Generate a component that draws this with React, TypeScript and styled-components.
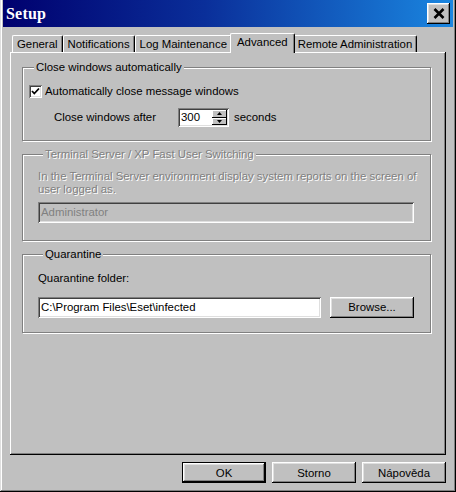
import React from "react";
import styled, { createGlobalStyle } from "styled-components";

const GlobalStyle = createGlobalStyle`
  html, body {
    margin: 0;
    padding: 0;
    background: #c0c0c0;
  }
  body {
    font-family: "Liberation Sans", Arial, sans-serif;
    font-size: 11.4px;
    color: #000;
  }
`;

const raisedShadow =
  "inset -1px -1px #000, inset 1px 1px #fff, inset -2px -2px #808080, inset 2px 2px #dfdfdf";
const sunkenShadow =
  "inset 1px 1px #808080, inset -1px -1px #fff, inset 2px 2px #404040, inset -2px -2px #dfdfdf";

const Setup = () => {
  return (
    <Window>
      <GlobalStyle />
      <TitleBar>
        <Title>Setup</Title>
        <CloseButton aria-label="close">
          <svg width="12" height="11" viewBox="0 0 12 11">
            <path d="M1.5 1 L10.5 10 M10.5 1 L1.5 10" stroke="#000" strokeWidth="2.6" />
          </svg>
        </CloseButton>
      </TitleBar>

      <Body>
        <TabStrip>
          <Tab>General</Tab>
          <Tab>Notifications</Tab>
          <Tab>Log Maintenance</Tab>
          <Tab $active>Advanced</Tab>
          <Tab>Remote Administration</Tab>
        </TabStrip>

        <Panel>
          <GroupBox $pad="11px 6px 13px">
            <Legend>Close windows automatically</Legend>
            <CheckRow>
              <CheckBox>
                <svg width="9" height="9" viewBox="0 0 9 9">
                  <path d="M1 4 L3.3 6.5 L8 1.5" stroke="#000" strokeWidth="1.8" fill="none" />
                </svg>
              </CheckBox>
              Automatically close message windows
            </CheckRow>
            <SpinRow>
              <SpinLabel>Close windows after</SpinLabel>
              <NumberBox>
                <NumberValue>300</NumberValue>
                <Spinner>
                  <SpinButton>
                    <svg width="5" height="3" viewBox="0 0 5 3">
                      <path d="M0 3 L2.5 0 L5 3 Z" fill="#000" />
                    </svg>
                  </SpinButton>
                  <SpinButton>
                    <svg width="5" height="3" viewBox="0 0 5 3">
                      <path d="M0 0 L2.5 3 L5 0 Z" fill="#000" />
                    </svg>
                  </SpinButton>
                </Spinner>
              </NumberBox>
              <Unit>seconds</Unit>
            </SpinRow>
          </GroupBox>

          <GroupBox $pad="9px 16px 17px 15px">
            <Legend $disabled>Terminal Server / XP Fast User Switching</Legend>
            <Note>
              In the Terminal Server environment display system reports on the screen of
              <br />
              user logged as.
            </Note>
            <TextField $disabled>Administrator</TextField>
          </GroupBox>

          <GroupBox $pad="11px 16px 14px 15px">
            <Legend>Quarantine</Legend>
            <FieldLabel>Quarantine folder:</FieldLabel>
            <PathRow>
              <TextField>C:\Program Files\Eset\infected</TextField>
              <Button>Browse...</Button>
            </PathRow>
          </GroupBox>
        </Panel>

        <Footer>
          <Button $default>OK</Button>
          <Button>Storno</Button>
          <Button>Nápověda</Button>
        </Footer>
      </Body>
    </Window>
  );
};

export default Setup;

const Window = styled.div`
  width: 456px;
  height: 492px;
  box-sizing: border-box;
  padding: 0 3px 3px;
  background: #c0c0c0;
  display: flex;
  flex-direction: column;
  box-shadow: inset -1px -1px #000, inset 1px 0 #dfdfdf, inset -2px -2px #808080,
    inset 2px 0 #fff;
`;

const TitleBar = styled.div`
  height: 27px;
  display: flex;
  align-items: center;
  justify-content: space-between;
  padding: 0 3px 0 3px;
  background: linear-gradient(to right, #00006e 0%, #0a2f9a 45%, #1a86e0 100%);
`;

const Title = styled.span`
  font-family: "Liberation Serif", "Times New Roman", serif;
  font-weight: bold;
  font-size: 16px;
  color: #fff;
  letter-spacing: 0.2px;
`;

const CloseButton = styled.div`
  width: 23px;
  height: 21px;
  display: flex;
  align-items: center;
  justify-content: center;
  background: #c0c0c0;
  box-shadow: ${raisedShadow};
`;

const Body = styled.div`
  flex: 1;
  display: flex;
  flex-direction: column;
  padding: 6px 7px 0;
`;

const TabStrip = styled.div`
  display: flex;
  align-items: flex-end;
  height: 19px;
  padding-left: 2px;
`;

const Tab = styled.div<{ $active?: boolean }>`
  position: relative;
  z-index: ${(p) => (p.$active ? 1 : 0)};
  height: ${(p) => (p.$active ? "20px" : "17px")};
  margin: ${(p) => (p.$active ? "0 -2px -1px -2px" : "0")};
  padding: ${(p) => (p.$active ? "0 6px" : "0 4px")};
  box-sizing: border-box;
  display: flex;
  align-items: ${(p) => (p.$active ? "flex-start" : "center")};
  padding-top: ${(p) => (p.$active ? "2px" : "0")};
  background: #c0c0c0;
  border-top: 1px solid #fff;
  border-left: 1px solid #fff;
  border-right: 1px solid #000;
  border-radius: 2px 2px 0 0;
  box-shadow: inset -1px 0 #808080;
  white-space: nowrap;
`;

const Panel = styled.div`
  height: 403px;
  box-sizing: border-box;
  padding: 9px 15px 0 12px;
  display: flex;
  flex-direction: column;
  gap: 7px;
  background: #c0c0c0;
  box-shadow: inset -1px -1px #000, inset 1px 1px #fff, inset -2px -2px #808080;
`;

const GroupBox = styled.fieldset<{ $pad: string }>`
  margin: 0;
  min-width: 0;
  padding: ${(p) => p.$pad};
  border: 1px solid #808080;
  box-shadow: 1px 1px 0 #fff, inset 1px 1px 0 #fff;
  line-height: 13px;
`;

const Legend = styled.legend<{ $disabled?: boolean }>`
  margin-left: 5px;
  padding: 0 2px;
  line-height: 13px;
  background: #c0c0c0;
  color: ${(p) => (p.$disabled ? "#808080" : "#000")};
  text-shadow: ${(p) => (p.$disabled ? "1px 1px 0 #fff" : "none")};
`;

const CheckRow = styled.div`
  display: flex;
  align-items: center;
  gap: 3px;
  height: 13px;
`;

const CheckBox = styled.span`
  width: 13px;
  height: 13px;
  box-sizing: border-box;
  display: flex;
  align-items: center;
  justify-content: center;
  background: #fff;
  box-shadow: ${sunkenShadow};
`;

const SpinRow = styled.div`
  display: flex;
  align-items: center;
  margin-top: 10px;
  padding-left: 25px;
`;

const SpinLabel = styled.span`
  width: 124px;
`;

const NumberBox = styled.div`
  width: 51px;
  height: 19px;
  box-sizing: border-box;
  padding: 2px;
  display: flex;
  background: #fff;
  box-shadow: ${sunkenShadow};
`;

const NumberValue = styled.span`
  flex: 1;
  padding-left: 1px;
  line-height: 15px;
`;

const Spinner = styled.div`
  width: 15px;
  display: flex;
  flex-direction: column;
`;

const SpinButton = styled.div`
  flex: 1;
  display: flex;
  align-items: center;
  justify-content: center;
  background: #c0c0c0;
  box-shadow: inset -1px -1px #000, inset 1px 1px #fff;
`;

const Unit = styled.span`
  margin-left: 5px;
`;

const Note = styled.p`
  margin: 0;
  line-height: 13px;
  color: #808080;
  text-shadow: 1px 1px 0 #fff;
  white-space: nowrap;
`;

const TextField = styled.div<{ $disabled?: boolean }>`
  flex: 1;
  height: 21px;
  box-sizing: border-box;
  padding: 0 3px;
  margin-top: ${(p) => (p.$disabled ? "6px" : "0")};
  display: flex;
  align-items: center;
  background: ${(p) => (p.$disabled ? "#c0c0c0" : "#fff")};
  color: ${(p) => (p.$disabled ? "#808080" : "#000")};
  box-shadow: ${sunkenShadow};
  white-space: nowrap;
`;

const FieldLabel = styled.div`
  line-height: 13px;
`;

const PathRow = styled.div`
  display: flex;
  align-items: center;
  gap: 9px;
  margin-top: 12px;
`;

const Button = styled.div<{ $default?: boolean }>`
  width: 84px;
  height: 21px;
  box-sizing: border-box;
  display: flex;
  align-items: center;
  justify-content: center;
  background: #c0c0c0;
  border: ${(p) => (p.$default ? "1px solid #000" : "none")};
  box-shadow: ${raisedShadow};
`;

const Footer = styled.div`
  display: flex;
  justify-content: flex-end;
  gap: 6px;
  padding-top: 7px;
`;
